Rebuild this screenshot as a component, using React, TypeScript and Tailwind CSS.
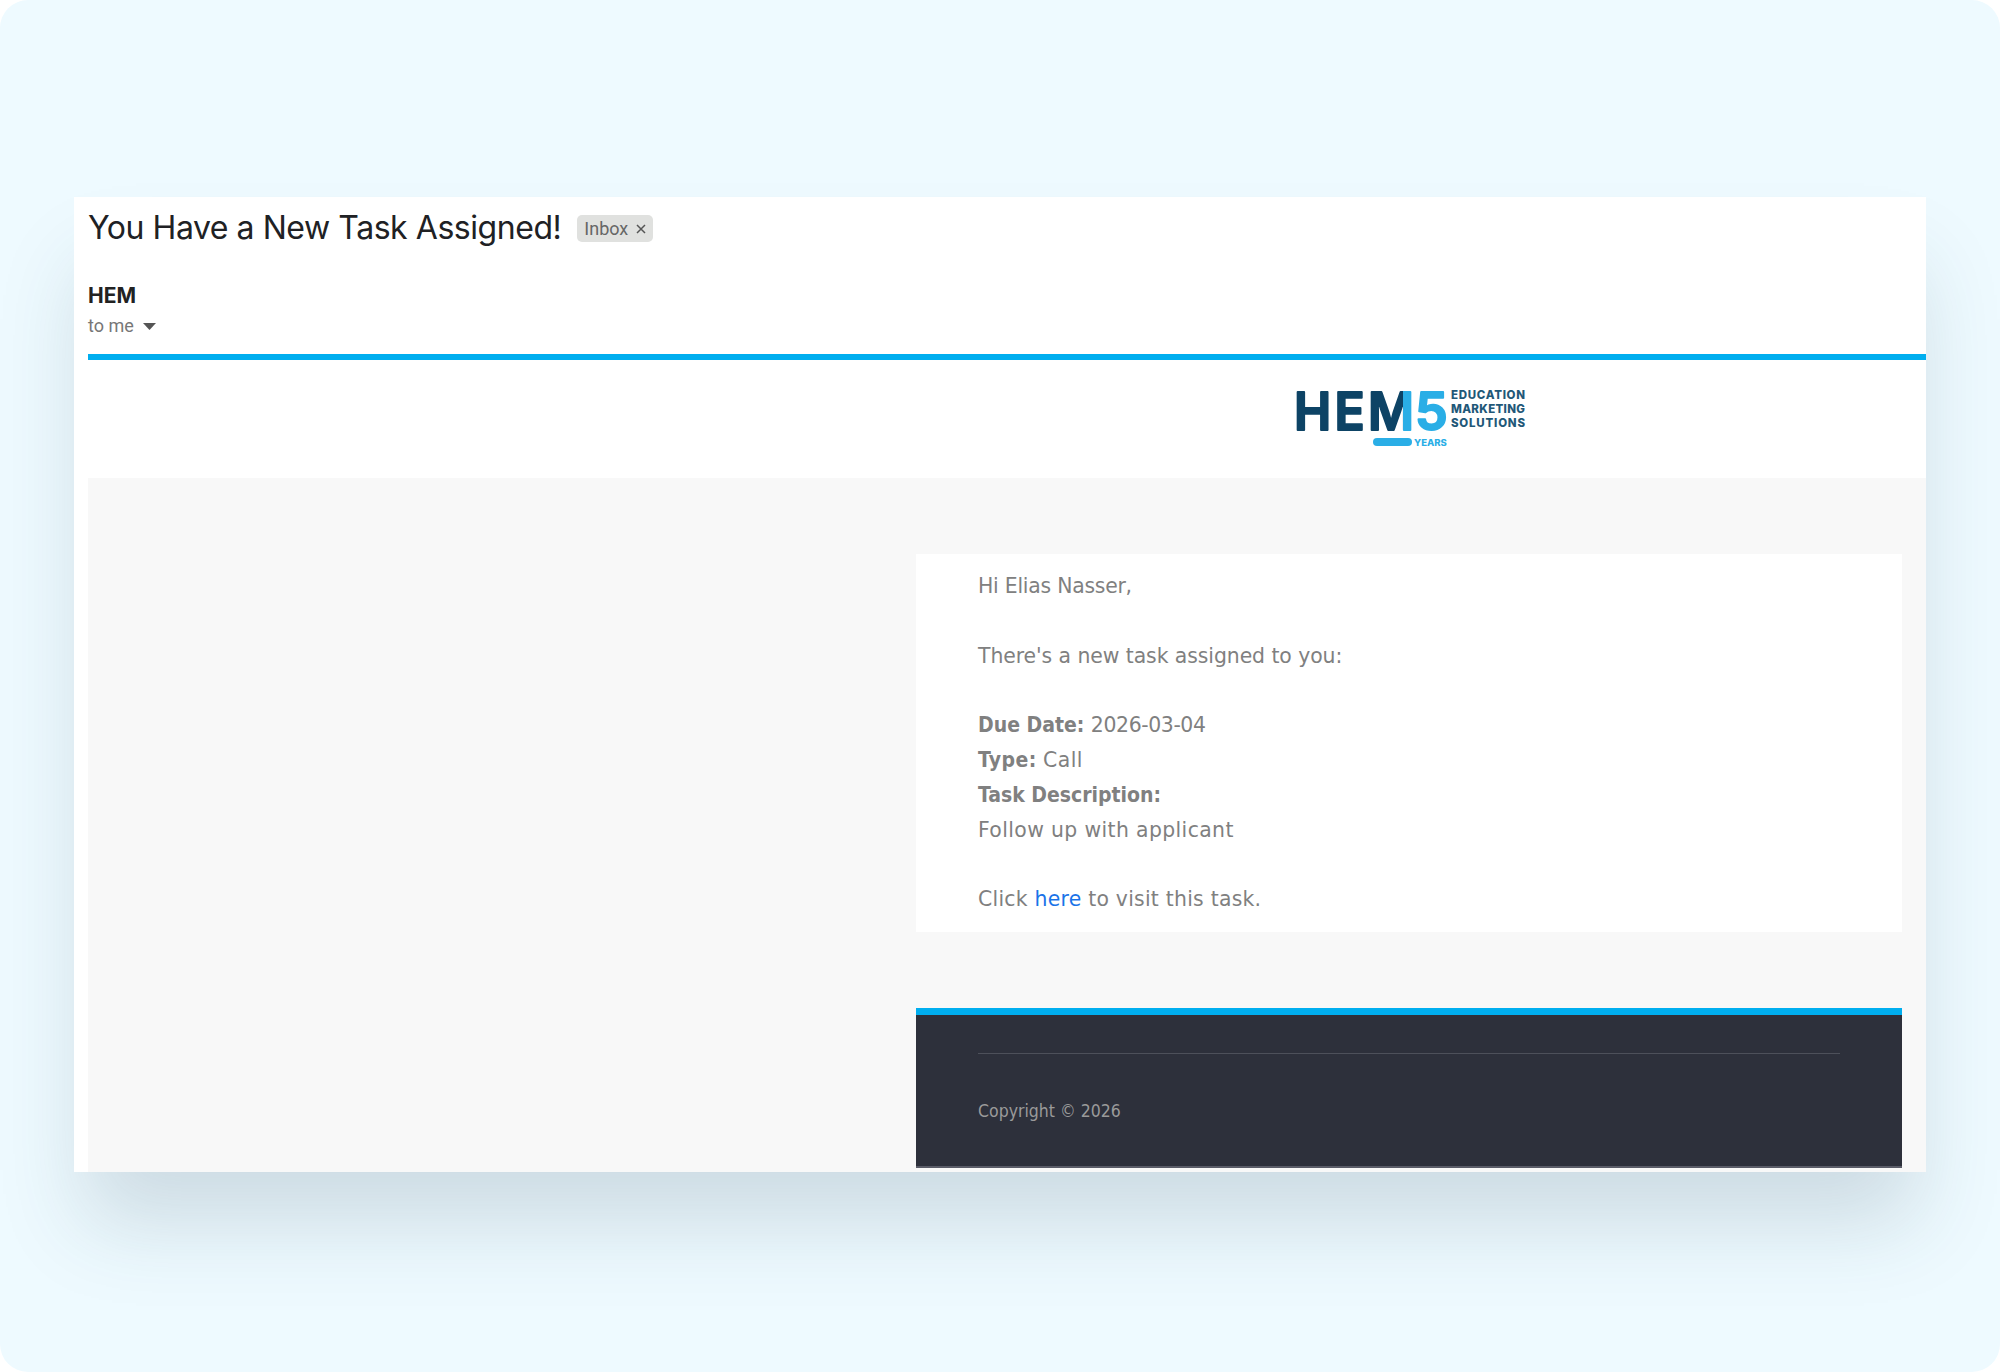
export default function App() {
  const body = "[font-family:'DejaVu_Sans',sans-serif]";
  const bold = "font-bold [font-family:'DejaVu_Sans_Condensed','DejaVu_Sans',sans-serif] text-[21px]";
  const cond = "[font-family:'DejaVu_Sans_Condensed','DejaVu_Sans',sans-serif]";
  return (
    <div className="w-[2000px] h-[1372px] bg-white overflow-hidden">
      <div className="w-full h-full rounded-[28px] bg-[#eefaff] pt-[197px] pl-[74px] overflow-hidden">
        <div className="w-[1852px] h-[975px] bg-white shadow-[0_60px_80px_-10px_rgba(40,70,90,0.17)] pl-[14px] flex flex-col">
          <div className="h-[157px] shrink-0 flex flex-col">
            <div className="flex items-center h-[60px] pt-[2px]">
              <h1 className="text-[32px] leading-[40px] text-[#202124] font-['Inter',sans-serif] tracking-[-0.45px]">You Have a New Task Assigned!</h1>
              <span className="ml-[16px] h-[27px] px-[7px] rounded-[5px] bg-[#e0e1df] text-[#666666] text-[18px] leading-[27px] font-['Roboto',sans-serif] flex items-center gap-[8px]">
                Inbox
                <svg width="10" height="10" viewBox="0 0 10 10" className="mt-[2px]"><path d="M1 1l8 8M9 1l-8 8" stroke="#555" strokeWidth="1.5" /></svg>
              </span>
            </div>
            <div className="mt-[25px] text-[21px] leading-[28px] font-bold text-[#222222] font-['Inter',sans-serif]">HEM</div>
            <div className="mt-[4px] flex items-center gap-[9px] text-[18px] leading-[24px] text-[#777777] font-['Roboto',sans-serif]">
              to me
              <svg width="13" height="7" viewBox="0 0 13 7"><path d="M0 0h13l-6.500 7z" fill="#555555" /></svg>
            </div>
          </div>
          <div className="h-[6px] shrink-0 bg-[#00aeef]" />
          <div className="h-[118px] shrink-0 pl-[1204px] pt-[24px]">
            <svg width="240" height="66" viewBox="0 0 240 66" className="overflow-visible">
              <defs>
                <linearGradient id="hemM" gradientUnits="userSpaceOnUse" x1="0" y1="0" x2="140" y2="0">
                  <stop offset="0.811" stopColor="#0d4365" />
                  <stop offset="0.811" stopColor="#2aaee6" />
                </linearGradient>
              </defs>
              <g strokeLinejoin="round" fontFamily="Inter, sans-serif" fontWeight="600" fontSize="52">
                <text transform="translate(2 0) scale(0.96 1)" x="0" y="46" fill="url(#hemM)" stroke="url(#hemM)" strokeWidth="2" textLength="125" lengthAdjust="spacing">HEM</text>
                <text x="123" y="46" fill="#2aaee6" stroke="#2aaee6" strokeWidth="2">5</text>
              </g>
              <g fontFamily="Inter, sans-serif" fontWeight="800" fontSize="11.500" fill="#1f5878">
                <text x="159" y="15" textLength="74">EDUCATION</text>
                <text x="159" y="29" textLength="74">MARKETING</text>
                <text x="159" y="43" textLength="74">SOLUTIONS</text>
              </g>
              <rect x="81" y="54" width="39" height="8" rx="4" fill="#2aaee6" />
              <text x="122" y="62" fontFamily="Inter, sans-serif" fontWeight="800" fontSize="9.500" fill="#2aaee6">YEARS</text>
            </svg>
          </div>
          <div className="flex-1 bg-[#f8f8f8] pt-[76px] pl-[828px] pr-[24px]">
            <div className={`h-[378px] bg-white pl-[62px] pt-[15px] text-[20.400px] leading-[34.800px] text-[#808080] ${body}`}>
              <p className="tracking-[-0.24px]">Hi Elias Nasser,</p>
              <p className="mt-[34.800px] tracking-[-0.07px]">There's a new task assigned to you:</p>
              <p className="mt-[34.800px]"><b className={bold}>Due Date:</b> <span className="tracking-[-0.38px]">2026-03-04</span></p>
              <p><b className={`${bold} tracking-[0.4px]`}>Type:</b> <span className="tracking-[0.4px]">Call</span></p>
              <p><b className={bold}>Task Description:</b></p>
              <p className="tracking-[0.37px]">Follow up with applicant</p>
              <p className="mt-[34.800px] tracking-[0.24px]">Click <span className="text-[#1a73e8]">here</span> to visit this task.</p>
            </div>
            <div className="mt-[76px] h-[160px] bg-[#2d303b] border-t-[7px] border-b-[2px] border-t-[#00aeef] border-b-[#5a5c68] px-[62px]">
              <div className="mt-[38px] h-[1px] bg-[#4d505a]" />
              <p className={`mt-[45px] text-[17.500px] leading-[24px] text-[#9a9a9a] ${cond}`}>Copyright © 2026</p>
            </div>
          </div>
        </div>
      </div>
    </div>
  );
}
